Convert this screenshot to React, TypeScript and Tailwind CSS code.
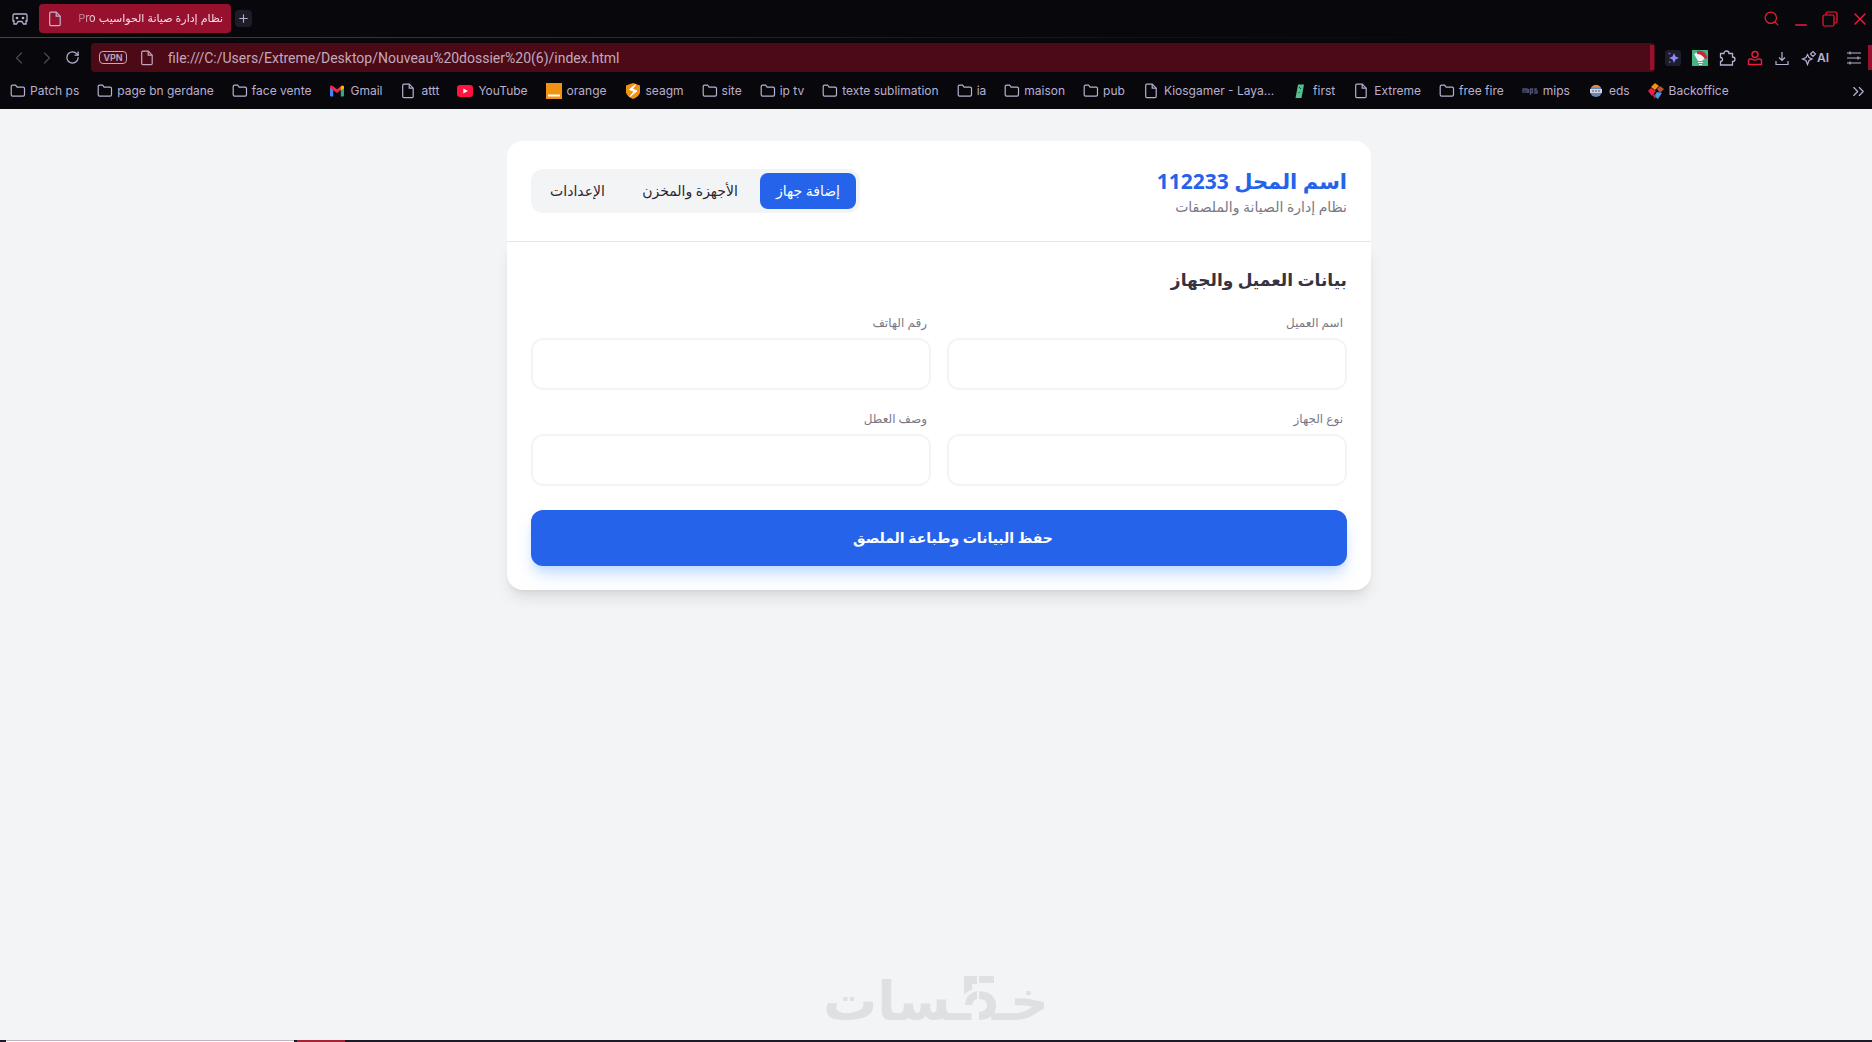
import React, { ReactNode, useState } from "react";
import {
  ChevronLeft,
  ChevronRight,
  ChevronsRight,
  Minus,
  Plus,
  RotateCw,
  Search,
  X,
} from "lucide-react";

const FolderIcon = () => (
  <svg width="16" height="16" viewBox="0 0 16 16" fill="none" stroke="currentColor" strokeWidth="1.2">
    <path d="M1.2 3.6q0-1.400 1.400-1.400h3l1.500 1.900h6q1.400 0 1.400 1.400v6.300q0 1.400-1.400 1.400H2.600q-1.400 0-1.400-1.400z" />
  </svg>
);

const FileIcon = () => (
  <svg width="16" height="16" viewBox="0 0 16 16" fill="none" stroke="currentColor" strokeWidth="1.2">
    <path d="M3.900 1.200h5.300l4 4v8.200q0 1.200-1.200 1.200H3.900q-1.200 0-1.200-1.200V2.400q0-1.200 1.200-1.200z" />
    <path d="M9.200 1.200v4h4" />
  </svg>
);

const GmailIcon = () => (
  <svg width="16" height="16" viewBox="0 0 16 16">
    <path d="M1 3.500 4.200 6v7.500H2q-1 0-1-1z" fill="#4285f4" />
    <path d="M15 3.500 11.800 6v7.500H14q1 0 1-1z" fill="#34a87a" />
    <path d="M1 3.800Q1.500 1.800 3.400 2.800L8 6.300l4.600-3.500v3.700L8 10 1 5z" fill="#f0273f" />
    <path d="m11.800 3.400 1.400-.9Q15 2.200 15 4v1.200l-3.200 2.400z" fill="#fbbc04" />
  </svg>
);

const YoutubeIcon = () => (
  <svg width="16" height="16" viewBox="0 0 16 16">
    <rect y="2" width="16" height="12" rx="3" fill="#ff1440" />
    <path d="m6.300 5.500 4.600 2.500-4.600 2.500z" fill="#fff" />
  </svg>
);

const OrangeIcon = () => (
  <svg width="16" height="16" viewBox="0 0 16 16">
    <path d="M0 0h16v16H0z" fill="#f39112" />
    <path d="M2 11.500h12v2H2z" fill="#fff" />
  </svg>
);

const SeagmIcon = () => (
  <svg width="16" height="16" viewBox="0 0 16 16">
    <path d="M1 2.500 8 0l7 2.500v7Q14 13.500 8 16 2 13.500 1 9.500z" fill="#f39112" />
    <path d="m10.500 1.500-6 5 4.500 2-4 5 7-5.500-4.500-2z" fill="#fff" stroke="#fff" />
  </svg>
);

const FirstIcon = () => (
  <svg width="16" height="16" viewBox="0 0 16 16">
    <path d="M6 1.500h6L9.500 15h-6z" fill="#4fbf8b" />
    <path d="m7 4 2 2M6.500 9l1 1" stroke="#1d4a3a" />
  </svg>
);

const MipsIcon = () => (
  <svg width="16" height="16" viewBox="0 0 16 16" fill="none" stroke="#4b4f70" strokeWidth="1.400">
    <path d="M1 10V6h2v4M3 6h2v4M6.500 6v4M8.500 12V6h2v3.500h-2M15 6h-2v2h2v2h-3" />
  </svg>
);

const EdsIcon = () => (
  <svg width="16" height="16" viewBox="0 0 16 16">
    <circle cx="8" cy="8" r="6" fill="#6b87b0" />
    <path d="M3 4.500Q8-1 13 4.500z" fill="#e08a52" />
    <path d="M2 6h12v4H2z" fill="#cdd3e2" />
    <path d="M4 8h8" stroke="#48557c" strokeDasharray="2 1" />
  </svg>
);

const BackofficeIcon = () => (
  <svg width="16" height="16" viewBox="0 0 16 16">
    <path d="m7 0 4 3-4 4-4-3z" fill="#f39112" />
    <path d="m12 3 4 3-4 4-3-4z" fill="#b5533d" />
    <path d="m3 5 5 3-4 5-4-5z" fill="#f0203f" />
    <path d="m9 9 5 1-4 6-4-3z" fill="#3f9bea" />
    <path d="m4 11 4 1-1 4z" fill="#c92c3f" />
  </svg>
);

interface Bookmark {
  label: string;
  icon?: ReactNode;
}

// bookmarks without an icon are folders
const bookmarks: Bookmark[] = [
  { label: "Patch ps" },
  { label: "page bn gerdane" },
  { label: "face vente" },
  { label: "Gmail", icon: <GmailIcon /> },
  { label: "attt", icon: <FileIcon /> },
  { label: "YouTube", icon: <YoutubeIcon /> },
  { label: "orange", icon: <OrangeIcon /> },
  { label: "seagm", icon: <SeagmIcon /> },
  { label: "site" },
  { label: "ip tv" },
  { label: "texte sublimation" },
  { label: "ia" },
  { label: "maison" },
  { label: "pub" },
  { label: "Kiosgamer - Laya...", icon: <FileIcon /> },
  { label: "first", icon: <FirstIcon /> },
  { label: "Extreme", icon: <FileIcon /> },
  { label: "free fire" },
  { label: "mips", icon: <MipsIcon /> },
  { label: "eds", icon: <EdsIcon /> },
  { label: "Backoffice", icon: <BackofficeIcon /> },
];

const TabStrip = () => (
  <div className="flex h-[37px] items-center">
    <button aria-label="GX corner" className="ml-3 mr-[11px] text-[#b9b0d0]">
      <svg width="16" height="16" viewBox="0 0 16 16" fill="none" stroke="currentColor" strokeWidth="1.300">
        <path d="M2.500 3h11q1.500 0 1.500 1.500v5.500h-1v3h-2.500L10 10.500H6L4.500 13H2v-3H1V4.500Q1 3 2.500 3z" />
        <circle cx="5" cy="7" r=".7" fill="currentColor" />
        <circle cx="11" cy="7" r=".7" fill="currentColor" />
      </svg>
    </button>
    <div className="flex h-[29px] w-48 items-center rounded bg-[#97112f] px-2 text-[#c9b3c8]">
      <FileIcon />
      <div
        dir="rtl"
        className="ml-1 flex-1 whitespace-nowrap text-[11px] text-[#eedde6] [mask-image:linear-gradient(to_right,transparent,black_28px)]"
      >
        نظام إدارة صيانة الحواسيب Pro
      </div>
    </div>
    <button
      aria-label="New tab"
      className="ml-1 flex h-[17px] w-[17px] items-center justify-center rounded-sm bg-[#1f1c29] text-[#b9b0d0]"
    >
      <Plus size={13} strokeWidth={2} />
    </button>
    <div className="ml-auto flex items-center gap-3 pr-0.5 text-[#f01a3c]">
      <button aria-label="Search tabs"><Search size={17} strokeWidth={1.7} /></button>
      <button aria-label="Minimise" className="pt-3"><Minus size={18} strokeWidth={2} /></button>
      <button aria-label="Restore">
        <svg width="16" height="16" viewBox="0 0 16 16" fill="none" stroke="currentColor" strokeWidth="1.200">
          <rect x="1" y="4" width="11" height="11" rx="1.500" />
          <path d="M4 4V2.500Q4 1 5.500 1h8Q15 1 15 2.500v8q0 1.500-1.500 1.500H12" />
        </svg>
      </button>
      <button aria-label="Close"><X size={20} strokeWidth={1.7} /></button>
    </div>
  </div>
);

const AddressRow = () => (
  <div className="flex h-[39px] items-center">
    <div className="flex items-center gap-2 pl-[9px] text-[#4a4659]">
      <button aria-label="Back"><ChevronLeft size={20} strokeWidth={1.5} /></button>
      <button aria-label="Forward"><ChevronRight size={20} strokeWidth={1.5} /></button>
      <button aria-label="Reload" className="text-[#b9b0d0]"><RotateCw size={15} strokeWidth={2} /></button>
    </div>
    <div className="ml-[11px] mr-[10px] flex h-[29px] flex-1 items-center rounded-sm bg-[#4c0a17] pl-2 pr-px text-[#c0a9bd]">
      <span className="flex h-[13px] w-7 items-center justify-center rounded-sm border border-[#c0a9bd] text-[9px] font-semibold">
        VPN
      </span>
      <span className="ml-3 mr-[13px]"><FileIcon /></span>
      <input
        aria-label="Address"
        className="min-w-0 flex-1 bg-transparent font-[Roboto,sans-serif] text-sm outline-none"
        defaultValue="file:///C:/Users/Extreme/Desktop/Nouveau%20dossier%20(6)/index.html"
      />
      <span className="h-[25px] w-1 bg-[#97112f]" />
    </div>
    <div className="flex items-center gap-[11px] text-[#b9b0d0]">
      <button aria-label="Aria">
        <svg width="16" height="16" viewBox="0 0 16 16">
          <rect width="16" height="16" rx="3" fill="#1f1c2e" />
          <path d="m9 3 1.500 3.500L14 8l-3.500 1.500L9 13l-1.500-3.500L4 8l3.500-1.500z" fill="#8a8cf5" />
          <path d="M3.500 3.500h2M4 12h1.500" stroke="#7a5bf0" strokeWidth="1.600" />
        </svg>
      </button>
      <button aria-label="Extension">
        <svg width="16" height="16" viewBox="0 0 16 16">
          <path d="M0 0h16v16H0z" fill="#43b581" />
          <path d="m2 4 4-2 7 6-3 3H6z" fill="#f4f4f6" />
          <path d="M5 1q8-2 10.500 7L13 9Q10 4 5 4z" fill="#d6213b" />
          <path d="m5 6 4 3M6 12.500h5M7 14.500h3" stroke="#dff5ea" />
        </svg>
      </button>
      <button aria-label="Extensions">
        <svg width="17" height="16" viewBox="0 0 17 16" fill="none" stroke="currentColor" strokeWidth="1.300">
          <path d="M1.500 3.500H5Q5 1 7.500 1T10 3.500h3.500V7q2.500 0 2.500 2.200t-2.500 2.300V15h-12v-3.500q2 0 2-2T1.500 7.500z" />
        </svg>
      </button>
      <button aria-label="Profile" className="text-[#f01a3c]">
        <svg width="16" height="16" viewBox="0 0 16 16" fill="none" stroke="currentColor" strokeWidth="1.400">
          <circle cx="8" cy="4.500" r="3" />
          <path d="M5 9H3.500q-2 0-2 2v3.500h13V11q0-2-2-2H11q-3 2.200-6 0z" />
        </svg>
      </button>
      <button aria-label="Downloads">
        <svg width="16" height="16" viewBox="0 0 16 16" fill="none" stroke="currentColor" strokeWidth="1.200">
          <path d="M8 2v8.500M5 7.500l3 3 3-3M2 11v3.500h12V11" />
        </svg>
      </button>
      <button aria-label="AI" className="flex items-center text-xs font-semibold">
        <svg width="16" height="16" viewBox="0 0 16 16" fill="none" stroke="currentColor" strokeWidth="1.200">
          <path d="M6.500 4.500 8 7.500l3 1.500-3 1.500-1.500 4-1.500-4L1.500 9 5 7.500z" />
          <path d="m9.500 4 2.500-2.500 2.500 2.500L12 6.500z" />
        </svg>
        AI
      </button>
      <button aria-label="Easy setup" className="ml-1.5">
        <svg width="16" height="16" viewBox="0 0 16 16" fill="none" stroke="currentColor" strokeWidth="1.200">
          <path d="M1 3h14M1 8h14M1 13h14" />
          <path d="M4 1.500v3M12 6.500v3M4 11.500v3" />
        </svg>
      </button>
    </div>
    <span className="ml-1.5 h-[25px] w-1 bg-[#97112f]" />
  </div>
);

const BookmarkBar = () => (
  <nav aria-label="Bookmarks" className="flex h-8 items-center pb-1 pl-2.5 pr-1 text-xs text-[#b9b0d0]">
    <div className="flex flex-1 items-center gap-[18px]">
      {bookmarks.map((bookmark) => (
        <a
          key={bookmark.label}
          href="#"
          className={`flex items-center whitespace-nowrap ${bookmark.icon ? "gap-[5px]" : "gap-1"}`}
        >
          {bookmark.icon ?? <FolderIcon />}
          {bookmark.label}
        </a>
      ))}
    </div>
    <button aria-label="More bookmarks">
      <ChevronsRight size={19} strokeWidth={1.5} />
    </button>
  </nav>
);

const tabs = [
  { label: "إضافة جهاز", width: "w-24" },
  { label: "الأجهزة والمخزن", width: "w-[124px]" },
  { label: "الإعدادات", width: "w-[85px]" },
];

const fields = [
  { id: "customer", label: "اسم العميل" },
  { id: "phone", label: "رقم الهاتف" },
  { id: "device", label: "نوع الجهاز" },
  { id: "fault", label: "وصف العطل" },
];

const KhamsatLogo = () => (
  <svg
    width="226"
    height="56"
    viewBox="0 0 226 56"
    fill="#dfe0e2"
    role="img"
    aria-label="خمسات"
    className="overflow-visible"
  >
    <text x="226" y="44" textAnchor="start" direction="rtl" fontSize="54" fontWeight="700">خـ</text>
    <text x="0" y="44" direction="rtl" textAnchor="end" fontSize="54" fontWeight="700">ـسات</text>
    <path d="M141 0h13v8h-5v6q-5 1-8 5z" />
    <path d="M156 0h15v7h-15z" />
    <path d="M142 29q1-12 12-14v8q-4 1-5 6z" />
    <path d="M156 15q17 1 17 15 0 13-17 14v-8q8-1 8-7 0-6-8-6z" />
  </svg>
);

export default function App() {
  const [activeTab, setActiveTab] = useState(tabs[0].label);

  return (
    <div className="flex min-h-screen flex-col bg-[#f3f4f6] font-[Inter,'DejaVu_Sans',sans-serif]">
      <header className="bg-[#08070c]">
        <TabStrip />
        <div className="h-px bg-gradient-to-r from-[#b01535] via-[#3a0a16] via-50% to-transparent to-80%" />
        <AddressRow />
        <BookmarkBar />
      </header>

      <div className="pl-1.5 pt-8 font-['Open_Sans','DejaVu_Sans',sans-serif]">
        <main dir="rtl" className="mx-auto w-full max-w-4xl px-4">
          <div className="flex items-center justify-between rounded-t-2xl border-b border-gray-200 bg-white p-6">
            <div>
              <h1 className="text-[21px] font-bold leading-8 text-[#2563eb]">اسم المحل 112233</h1>
              <p className="text-sm leading-5 text-[#7b7885]">نظام إدارة الصيانة والملصقات</p>
            </div>
            <div className="flex gap-2 rounded-xl bg-gray-100 p-1">
              {tabs.map((tab) => (
                <button
                  key={tab.label}
                  onClick={() => setActiveTab(tab.label)}
                  className={`h-9 whitespace-nowrap rounded-lg text-sm ${tab.width} ${
                    activeTab === tab.label ? "bg-[#2563eb] text-white" : "text-[#2a2630]"
                  }`}
                >
                  {tab.label}
                </button>
              ))}
            </div>
          </div>

          <form className="rounded-b-2xl bg-white p-6 shadow-lg" onSubmit={(e) => e.preventDefault()}>
            <h2 className="mb-4 text-[17px] font-bold leading-7 text-[#34333f]">بيانات العميل والجهاز</h2>
            <div className="grid grid-cols-2 gap-4">
              {fields.map((field) => (
                <div key={field.id}>
                  <label htmlFor={field.id} className="mb-0.5 mr-1 block text-xs leading-[26px] text-[#7b7885]">
                    {field.label}
                  </label>
                  <input
                    id={field.id}
                    className="block h-[52px] w-full rounded-xl border-2 border-gray-100 px-3 outline-none focus:border-blue-500"
                  />
                </div>
              ))}
            </div>
            <button className="mt-6 h-14 w-full rounded-xl bg-[#2563eb] pl-7 text-sm font-bold text-white shadow-lg shadow-blue-200">
              حفظ البيانات وطباعة الملصق
            </button>
          </form>
        </main>
      </div>

      <footer className="mt-auto">
        <div className="flex justify-center pb-2 font-['DejaVu_Sans',sans-serif]">
          <KhamsatLogo />
        </div>
        <div className="flex h-0.5 bg-[#1b1a26] pl-1.5">
          <span className="w-72 border-t border-[#c4b2c6] bg-white" />
          <span className="ml-[3px] w-12 bg-[#a82236]" />
        </div>
      </footer>
    </div>
  );
}
